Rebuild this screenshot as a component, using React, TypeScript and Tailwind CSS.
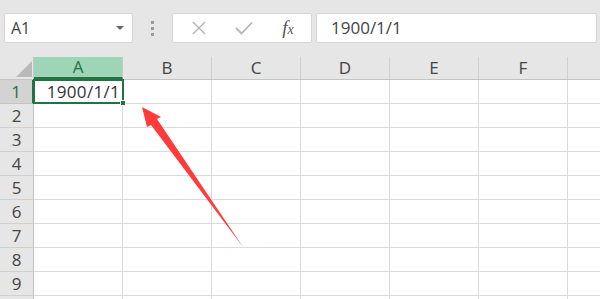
import React from 'react';

const cols = ['A', 'B', 'C', 'D', 'E', 'F', ''];
const rows = [1, 2, 3, 4, 5, 6, 7, 8, 9, 10];

export default function App() {
  const font = { fontFamily: '"Open Sans", "Noto Sans", sans-serif' };
  return (
    <div className="relative w-[600px] h-[299px] overflow-hidden bg-white text-[#333]" style={font}>
      {/* toolbar */}
      <div className="flex items-start h-[57px] bg-[#e6e6e6] pt-[13px] pl-[4px] pr-[3px]">
        <div className="flex items-center justify-between w-[129px] h-[30px] bg-white border border-[#d6d6d6] rounded-[2px] pl-[6px] pr-[8px]">
          <span className="text-[16px] text-[#444]">A1</span>
          <span className="w-0 h-0 border-l-[4px] border-r-[4px] border-t-[4px] border-l-transparent border-r-transparent border-t-[#666]" />
        </div>
        <div className="flex flex-col items-center justify-center gap-[3px] w-[39px] h-[30px]">
          <span className="w-[3px] h-[3px] bg-[#9a9a9a]" />
          <span className="w-[3px] h-[3px] bg-[#9a9a9a]" />
          <span className="w-[3px] h-[3px] bg-[#9a9a9a]" />
        </div>
        <div className="flex items-center w-[140px] h-[30px] bg-white border border-[#d6d6d6] rounded-[2px]">
          <div className="w-[50px] flex justify-center pl-[2px]">
            <svg width="14" height="14" viewBox="0 0 14 14">
              <path d="M1 1 L13 13 M13 1 L1 13" stroke="#b4b4b4" strokeWidth="1.4" fill="none" />
            </svg>
          </div>
          <div className="w-[42px] flex justify-center">
            <svg width="18" height="14" viewBox="0 0 18 14">
              <path d="M1 7 L6.5 12.5 L17 1.5" stroke="#b4b4b4" strokeWidth="1.8" fill="none" />
            </svg>
          </div>
          <div className="w-[46px] flex justify-center">
            <span className="text-[19px] italic text-[#555]" style={{ fontFamily: '"Liberation Serif", serif' }}>
              f<span className="text-[14px]">x</span>
            </span>
          </div>
        </div>
        <div className="w-[4px]" />
        <div className="flex items-center flex-1 h-[30px] bg-white border border-[#d6d6d6] rounded-[2px] pl-[14px]">
          <span className="text-[17px] text-[#444]">1900/1/1</span>
        </div>
      </div>

      {/* column headers */}
      <div className="flex h-[23px] bg-[#e6e6e6] border-b border-[#c4c4c4]">
        <div className="relative w-[34px] shrink-0 border-r border-[#c8c8c8]">
          <svg className="absolute left-[16px] top-[4px]" width="16" height="16" viewBox="0 0 16 16">
            <path d="M0 16 L16 16 L16 0 Z" fill="#b9b9b9" />
          </svg>
        </div>
        {cols.map((c, i) => (
          <div
            key={i}
            className={
              i === 0
                ? 'w-[89px] shrink-0 flex items-center justify-center text-[17px] text-[#217346] bg-[#9fd5b7] border-r border-[#c8c8c8] border-b-2 border-b-[#217346]'
                : 'w-[89px] shrink-0 flex items-center justify-center text-[17px] text-[#444] border-r border-[#d0d0d0]'
            }
          >
            {c}
          </div>
        ))}
      </div>

      {/* rows */}
      {rows.map((r) => (
        <div key={r} className="flex h-[24px]">
          <div
            className={
              r === 1
                ? 'w-[34px] shrink-0 flex items-center justify-center text-[17px] text-[#217346] bg-[#d3d3d3] border-r-2 border-[#217346] border-b border-b-[#c4c4c4]'
                : 'w-[34px] shrink-0 flex items-center justify-center text-[17px] text-[#444] bg-[#e6e6e6] border-r border-[#c4c4c4] border-b border-b-[#d0d0d0]'
            }
          >
            {r < 10 ? r : ''}
          </div>
          {cols.map((c, i) => (
            <div key={i} className="w-[89px] shrink-0 border-r border-b border-[#dadada]" />
          ))}
        </div>
      ))}

      {/* selected cell A1 */}
      <div className="absolute left-[33px] top-[79px] w-[91px] h-[25px] border-2 border-[#217346] flex items-center justify-end pr-[2px]">
        <span className="text-[17px] text-[#333] tracking-[0.3px]">1900/1/1</span>
        <span className="absolute right-[-4px] bottom-[-4px] w-[6px] h-[6px] bg-[#217346] border border-white" />
      </div>

      {/* red arrow */}
      <svg className="absolute left-0 top-0" width="600" height="299" viewBox="0 0 600 299">
        <path d="M142 107 L161 117 L157 119 L243 247 L151 125 L147 127 Z" fill="#ff3b3b" />
      </svg>
    </div>
  );
}
